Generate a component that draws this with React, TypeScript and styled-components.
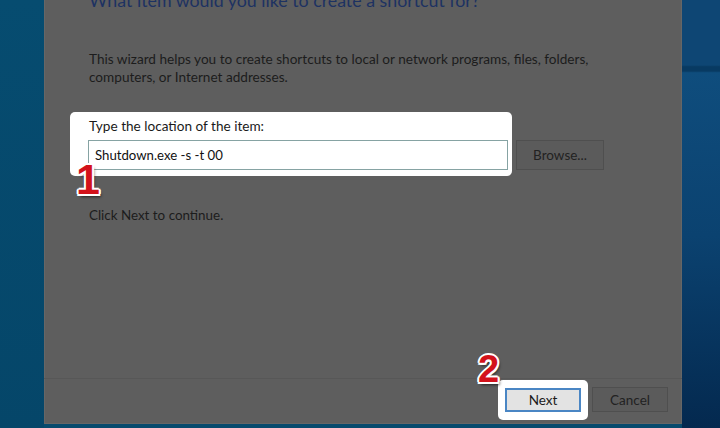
import React from "react";
import styled, { createGlobalStyle } from "styled-components";

const Global = createGlobalStyle`
  html, body { margin: 0; padding: 0; }
  body {
    width: 720px;
    height: 428px;
    overflow: hidden;
    font-family: Lato, "Open Sans", "Noto Sans", sans-serif;
    background: #074a6d;
  }
`;

const Desktop = styled.div`
  width: 720px;
  height: 428px;
  display: flex;
  align-items: flex-start;
  overflow: hidden;
  background: #074a6d;
`;

const DesktopLeft = styled.div`
  width: 44px;
  height: 100%;
  flex-shrink: 0;
  background: linear-gradient(to bottom, #064c70, #054669);
`;

const DesktopRight = styled.div`
  flex: 1;
  height: 100%;
  background: linear-gradient(
    to bottom,
    #0e4674 0%,
    #0e4674 15.2%,
    #083a62 15.6%,
    #083a62 16.6%,
    #0f4d7d 17%,
    #0b4270 55%,
    #04294f 100%
  );
`;

const Dialog = styled.div`
  width: 638px;
  height: 424px;
  flex-shrink: 0;
  display: flex;
  flex-direction: column;
  background: #5e5e5e;
  box-shadow: inset 1px 0 0 #666, inset -1px 0 0 #666, inset 0 -1px 0 #666;
`;

const Body = styled.div`
  flex: 1;
  display: flex;
  flex-direction: column;
  align-items: flex-start;
  padding-left: 45px;
  color: #1c1c1c;
`;

const Title = styled.div`
  margin-top: -11px;
  font-size: 17.8px;
  line-height: 22px;
  color: #1d3262;
  white-space: nowrap;
`;

const Paragraph = styled.p`
  margin: 39px 0 0 0;
  width: 540px;
  font-size: 13.6px;
  line-height: 18px;
`;

const InputRow = styled.div`
  margin-top: 26px;
  margin-left: -19px;
  display: flex;
  align-items: flex-end;
  gap: 4px;
`;

const Spotlight = styled.div`
  position: relative;
  display: flex;
  flex-direction: column;
  gap: 5px;
  padding: 5px 4px 6px 18px;
  background: #ffffff;
  border-radius: 5px;
`;

const Label = styled.div`
  font-size: 13.6px;
  line-height: 18px;
  color: #1a1a1a;
  padding-left: 1px;
`;

const TextBox = styled.div`
  width: 420px;
  height: 30px;
  box-sizing: border-box;
  display: flex;
  align-items: center;
  padding-left: 6px;
  border: 1px solid #86a3a3;
  background: #fff;
  font-size: 13.2px;
  color: #111;
`;

const Step = styled.div<{ $size: number }>`
  position: absolute;
  font-family: "Liberation Sans", Arial, sans-serif;
  font-weight: 700;
  font-size: ${(p) => p.$size}px;
  line-height: 1;
  color: #d3121b;
  text-shadow:
    2px 0 0 #fff, -2px 0 0 #fff, 0 2px 0 #fff, 0 -2px 0 #fff,
    1.5px 1.5px 0 #fff, -1.5px 1.5px 0 #fff, 1.5px -1.5px 0 #fff, -1.5px -1.5px 0 #fff,
    2px 3px 3px rgba(0, 0, 0, 0.6);
  pointer-events: none;
`;

const DimButton = styled.div<{ $w: number; $h: number }>`
  width: ${(p) => p.$w}px;
  height: ${(p) => p.$h}px;
  box-sizing: border-box;
  display: flex;
  align-items: center;
  justify-content: center;
  background: #5b5b5b;
  border: 1px solid #4f4f4f;
  font-size: 13.5px;
  color: #222;
`;

const Continue = styled.div`
  margin-top: 30px;
  font-size: 13.4px;
  line-height: 18px;
`;

const Footer = styled.div`
  height: 46px;
  box-sizing: border-box;
  border-top: 1px solid #575757;
  display: flex;
  justify-content: flex-end;
  align-items: center;
  gap: 4px;
  padding: 0 14px 4px 0;
`;

const ButtonSpot = styled.div`
  position: relative;
  padding: 8px 7px;
  background: #fff;
  border-radius: 5px;
`;

const PrimaryButton = styled.div`
  width: 76px;
  height: 24px;
  box-sizing: border-box;
  display: flex;
  align-items: center;
  justify-content: center;
  background: #e3e3e3;
  border: 2px solid #4a86c4;
  font-size: 13.5px;
  color: #1a1a1a;
`;

export default function App() {
  return (
    <>
      <Global />
      <Desktop>
        <DesktopLeft />
        <Dialog>
          <Body>
            <Title>What item would you like to create a shortcut for?</Title>
            <Paragraph>
              This wizard helps you to create shortcuts to local or network programs, files, folders,
              computers, or Internet addresses.
            </Paragraph>
            <InputRow>
              <Spotlight>
                <Label>Type the location of the item:</Label>
                <TextBox>Shutdown.exe -s -t 00</TextBox>
                <Step $size={43} style={{ left: 6, top: 46 }}>1</Step>
              </Spotlight>
              <DimButton $w={88} $h={30} style={{ marginBottom: 6 }}>Browse...</DimButton>
            </InputRow>
            <Continue>Click Next to continue.</Continue>
          </Body>
          <Footer>
            <ButtonSpot>
              <PrimaryButton>Next</PrimaryButton>
              <Step $size={38} style={{ left: -20, top: -30 }}>2</Step>
            </ButtonSpot>
            <DimButton $w={76} $h={25}>Cancel</DimButton>
          </Footer>
        </Dialog>
        <DesktopRight />
      </Desktop>
    </>
  );
}
